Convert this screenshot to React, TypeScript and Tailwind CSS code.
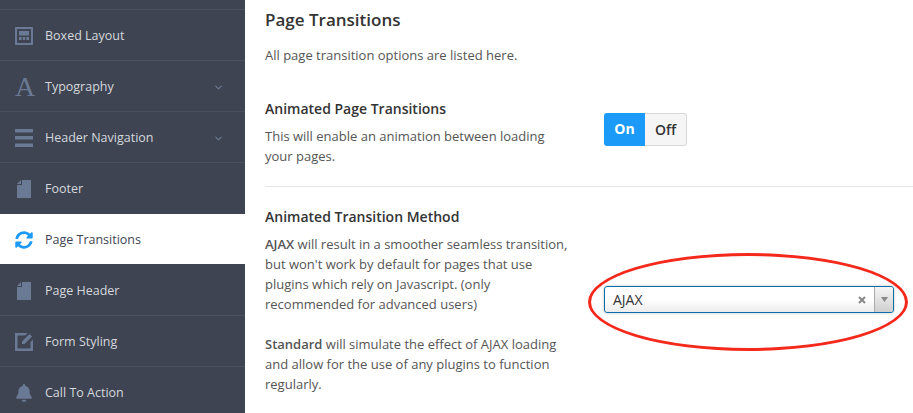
import { ChevronDown } from 'lucide-react';
import { FaSyncAlt, FaBell } from 'react-icons/fa';
import type { ReactNode } from 'react';

const ic = 'w-[18px] h-[18px] fill-[#6b7a94]';

function BoxedIcon() {
  return (
    <svg viewBox="0 0 18 18" className={ic}>
      <path fillRule="evenodd" d="M0 0h18v18H0zM2 2v14h14V2z" />
      <path d="M4 4h10v4.500H4zM4 10h2.600v3H4zM7.700 10h2.600v3H7.700zM11.400 10H14v3h-2.600z" />
    </svg>
  );
}

function MenuIcon() {
  return (
    <svg viewBox="0 0 18 18" className={ic}>
      <path d="M0 0h18v3.600H0zM0 7h18v3.600H0zM0 14.400h18V18H0z" />
    </svg>
  );
}

function FileIcon() {
  return (
    <svg viewBox="0 0 18 18" className={ic}>
      <path d="M7 0h9v18H2V5h5zM2 4l4-4v4z" />
    </svg>
  );
}

function EditIcon() {
  return (
    <svg viewBox="0 0 18 18" className={ic}>
      <path d="M0 0h12.500l-2.500 2.500H2.500v13h13V9l2.500-2.500V18H0z" />
      <path d="M14.500 1l2.500 2.500-7.500 7.500H7V8.500z" />
    </svg>
  );
}

interface NavItem {
  label: string;
  icon: ReactNode;
  chevron?: boolean;
  active?: boolean;
}

const navItems: NavItem[] = [
  { label: 'Boxed Layout', icon: <BoxedIcon /> },
  {
    label: 'Typography',
    chevron: true,
    icon: <span className="w-[18px] text-[28px] leading-none text-[#6b7a94] font-['Liberation_Serif',serif] text-center">A</span>,
  },
  { label: 'Header Navigation', icon: <MenuIcon />, chevron: true },
  { label: 'Footer', icon: <FileIcon /> },
  { label: 'Page Transitions', icon: <FaSyncAlt size={18} className="text-[#1b9af7]" />, active: true },
  { label: 'Page Header', icon: <FileIcon /> },
  { label: 'Form Styling', icon: <EditIcon /> },
  { label: 'Call To Action', icon: <FaBell size={18} className="text-[#6b7a94]" /> },
];

function Sidebar() {
  return (
    <aside className="w-[245px] shrink-0 bg-[#3e4451] pt-[9px] h-[413px] overflow-hidden">
      {navItems.map((item) => (
        <div
          key={item.label}
          className={`h-[51px] pt-[2px] flex items-center pl-[15px] pr-[21px] text-[12.500px] border-t ${
            item.active ? 'bg-white border-[#3e4451] text-[#3e4451]' : item.label === 'Page Header' ? 'border-[#3e4451] text-[#d5d8de]' : 'border-[#4a505d] text-[#d5d8de]'
          }`}
        >
          <span className="w-[30px] flex items-center">{item.icon}</span>
          <span className="flex-1">{item.label}</span>
          {item.chevron && <ChevronDown size={11} strokeWidth={2.5} className="text-[#6b7a94]" />}
        </div>
      ))}
    </aside>
  );
}

export default function App() {
  return (
    <div className="relative w-[913px] h-[413px] overflow-hidden bg-white flex font-['Open_Sans',sans-serif]">
      <Sidebar />
      <main className="flex-1 pl-[20px] text-[13px] leading-[20px] text-[#555]">
        <h1 className="text-[17px] font-semibold text-[#333] leading-[24px] pt-[8px]">Page Transitions</h1>
        <p className="mt-[13px]">All page transition options are listed here.</p>

        <section className="flex items-start mt-[33px] pb-[20px] border-b border-[#e6e6e6]">
          <div className="w-[339px]">
            <h2 className="text-[14px] font-semibold text-[#333] leading-[21px]">Animated Page Transitions</h2>
            <p className="mt-[7px] w-[300px]">This will enable an animation between loading your pages.</p>
          </div>
          <div className="flex mt-[15px] text-[14px] font-bold h-[33px] leading-[31px]">
            <span className="w-[41px] text-center bg-[#1b9af7] text-white rounded-l-[3px]">On</span>
            <span className="w-[42px] text-center bg-[#f5f5f5] text-[#333] font-semibold border border-l-0 border-[#d9d9d9] rounded-r-[3px]">Off</span>
          </div>
        </section>

        <section className="flex items-start mt-[19px]">
          <div className="w-[339px] shrink-0">
            <h2 className="text-[14px] font-semibold text-[#333] leading-[21px]">Animated Transition Method</h2>
            <p className="mt-[7px] w-[310px]">
              <b className="font-semibold">AJAX</b> will result in a smoother seamless transition, but won't work by default for pages that use plugins which rely on Javascript. (only recommended for advanced users)
            </p>
            <p className="mt-[20px] w-[310px]">
              <b className="font-semibold">Standard</b> will simulate the effect of AJAX loading and allow for the use of any plugins to function regularly.
            </p>
          </div>
          <div className="mt-[80px] w-[290px] h-[27px] flex items-center border border-[#0a6fa8] rounded-[3px] bg-gradient-to-b from-white from-50% to-[#ececec] shadow-[0_0_3px_rgba(0,0,0,0.25)]">
            <span className="flex-1 pl-[8px] text-[14px] text-[#333]">AJAX</span>
            <svg viewBox="0 0 8 8" className="w-[8px] h-[8px] mr-[8px] stroke-[#888]" strokeWidth={2}>
              <path d="M1 1l6 6M7 1l-6 6" />
            </svg>
            <span className="w-[19px] h-full flex items-center justify-center border-l border-[#aaa] bg-gradient-to-b from-[#f5f5f5] to-[#cfcfcf] rounded-r-[3px]">
              <svg viewBox="0 0 7 5" className="w-[7px] h-[5px] fill-[#888]">
                <path d="M0 0h7L3.500 5z" />
              </svg>
            </span>
          </div>
        </section>
      </main>
      <div className="absolute left-[588px] top-[253px] w-[320px] h-[98px] rounded-[50%] border-[3px] border-[#f5281c]" />
    </div>
  );
}
